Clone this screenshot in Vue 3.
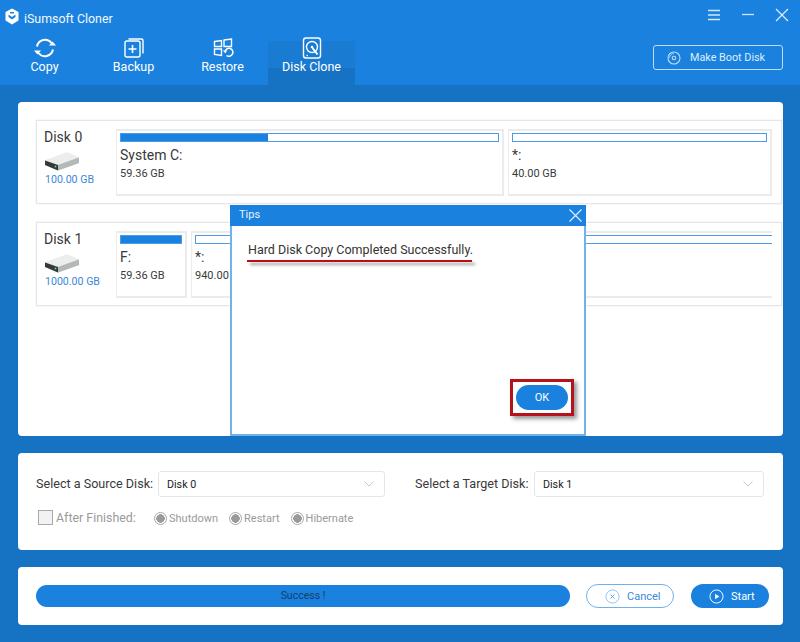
<script setup>
const tabs = [
  { label: 'Copy', icon: 'copy' },
  { label: 'Backup', icon: 'backup' },
  { label: 'Restore', icon: 'restore' },
  { label: 'Disk Clone', icon: 'clone', active: true },
]
const disks = [
  { name: 'Disk 0', size: '100.00 GB', parts: [
    { name: 'System C:', size: '59.36 GB', fill: 39, width: 388 },
    { name: '*:', size: '40.00 GB', fill: 0, width: 264 },
  ] },
  { name: 'Disk 1', size: '1000.00 GB', parts: [
    { name: 'F:', size: '59.36 GB', fill: 100, width: 71 },
    { name: '*:', size: '940.00 GB', fill: 0, width: 640 },
  ] },
]
</script>

<template>
  <div class="app">
    <header class="head">
      <div class="titlebar">
        <svg class="logo" width="14" height="17" viewBox="0 0 14 17">
          <path d="M7 .5 13.500 4v8.500L7 16.500 .5 12.500V4z" fill="#fff"/>
          <path d="M3.500 6.500 7 9l3.500-2.500V9L7 11.500 3.500 9z" fill="#1a82de"/>
          <path d="M5 4h4v1.500H5z" fill="#1a82de"/>
        </svg>
        <span class="apptitle">iSumsoft Cloner</span>
        <span class="spacer"></span>
        <svg class="winbtn" width="14" height="12" viewBox="0 0 14 12"><path d="M1 1.500h12M1 6h12M1 10.500h12" stroke="#cfe6fb" stroke-width="1.300" fill="none"/></svg>
        <svg class="winbtn min" width="14" height="12" viewBox="0 0 14 12"><path d="M1 5.500h12" stroke="#cfe6fb" stroke-width="1.300" fill="none"/></svg>
        <svg class="winbtn close" width="14" height="14" viewBox="0 0 14 14"><path d="M1 1l12 12M13 1 1 13" stroke="#e4f1fd" stroke-width="1.100" fill="none"/></svg>
      </div>
      <div class="navrow">
        <nav class="tabs">
          <div v-for="t in tabs" :key="t.label" class="tab" :class="{ active: t.active }">
            <svg class="tabicon" width="24" height="24" viewBox="0 0 24 24" fill="none" stroke="#fff" stroke-width="1.400">
              <template v-if="t.icon === 'copy'">
                <path d="M4 10.500a8.200 8.200 0 0 1 14.500-3.500" stroke-width="2"/>
                <path d="M20 13.500a8.200 8.200 0 0 1-14.500 3.500" stroke-width="2"/>
                <path d="M16 9.500h7l-3.500-4z" fill="#fff" stroke="none"/>
                <path d="M8 14.500H1l3.500 4z" fill="#fff" stroke="none"/>
              </template>
              <template v-else-if="t.icon === 'backup'">
                <rect x="3" y="5" width="15" height="16" rx="2"/>
                <path d="M6.500 3h13a1.500 1.500 0 0 1 1.500 1.500v13"/>
                <path d="M10.500 9v8M6.500 13h8" stroke-width="1.600"/>
              </template>
              <template v-else-if="t.icon === 'restore'">
                <path d="M3.500 5.500 10.500 4.500v6h-7zM13 4l7.500-1v7.500H13zM3.500 13h7v6.500l-7-1z"/>
                <path d="M14 15.500a4 4 0 1 1 1.500 4" stroke-width="1.500"/>
                <path d="M11.800 14.500h4.500l-2 2.800z" fill="#fff" stroke="none"/>
              </template>
              <template v-else>
                <rect x="3.500" y="2" width="17" height="20" rx="2.500"/>
                <circle cx="12" cy="11" r="5.500"/>
                <circle cx="12" cy="11" r="1.300" fill="#fff" stroke="none"/>
                <path d="M12.500 12l5 6.500" stroke-width="2"/>
                <path d="M6.500 19.500h1.500" />
              </template>
            </svg>
            <span>{{ t.label }}</span>
          </div>
        </nav>
        <div class="bootbtn">
          <svg width="14" height="14" viewBox="0 0 14 14" fill="none" stroke="#b9dbf8" stroke-width="1.100"><circle cx="7" cy="7" r="6"/><circle cx="7" cy="7" r="1.700"/><path d="M2.500 7A4.500 4.500 0 0 1 7 2.500" stroke-width=".8"/></svg>
          <span>Make Boot Disk</span>
        </div>
      </div>
    </header>

    <main class="body">
      <section class="card disks">
        <div v-for="d in disks" :key="d.name" class="diskrow">
          <div class="diskinfo">
            <div class="diskname">{{ d.name }}</div>
            <svg class="drive" width="36" height="20" viewBox="0 0 36 20">
              <path d="M1 9.500 23 1.500 35 6.500V12L14 19.500 1 14z" fill="#d2d4d4"/>
              <path d="M1 9.500 23 1.500 35 6.500 14 14z" fill="#eceded"/>
              <path d="M1 9.500 14 14V19.500L1 14z" fill="#34393a"/>
              <path d="M14 14 35 6.500V12L14 19.500z" fill="#b5b8b8"/>
              <circle cx="11.500" cy="15.500" r=".9" fill="#5fe07a"/>
            </svg>
            <div class="disksize">{{ d.size }}</div>
          </div>
          <div class="parts">
            <div v-for="p in d.parts" :key="p.name + p.size" class="part" :style="{ width: p.width + 'px' }">
              <div class="bar"><div class="fill" :style="{ width: p.fill + '%' }"></div></div>
              <div class="partname">{{ p.name }}</div>
              <div class="partsize">{{ p.size }}</div>
            </div>
          </div>
        </div>
      </section>

      <section class="card options">
        <div class="selects">
          <div class="selgroup source">
            <label>Select a Source Disk:</label>
            <div class="select"><span>Disk 0</span><svg width="10" height="6" viewBox="0 0 10 6"><path d="M.5.500 5 5 9.500.500" fill="none" stroke="#c2c6ca"/></svg></div>
          </div>
          <div class="selgroup target">
            <label>Select a Target Disk:</label>
            <div class="select"><span>Disk 1</span><svg width="10" height="6" viewBox="0 0 10 6"><path d="M.5.500 5 5 9.500.500" fill="none" stroke="#c2c6ca"/></svg></div>
          </div>
        </div>
        <div class="after">
          <span class="check"></span>
          <span class="aftertext">After Finished:</span>
          <span class="radio"><i></i>Shutdown</span>
          <span class="radio"><i></i>Restart</span>
          <span class="radio"><i></i>Hibernate</span>
        </div>
      </section>

      <section class="card actions">
        <div class="progress">Success !</div>
        <div class="btn cancel">
          <svg width="15" height="15" viewBox="0 0 16 16" fill="none" stroke="#8cc2f2"><circle cx="8" cy="8" r="7"/><path d="M5.800 5.800l4.400 4.400M10.200 5.800l-4.400 4.400" stroke="#6fa6de"/></svg>
          <span>Cancel</span>
        </div>
        <div class="btn start">
          <svg width="15" height="15" viewBox="0 0 16 16" fill="none" stroke="#fff"><circle cx="8" cy="8" r="7"/><path d="M6.500 5v6L11 8z" fill="#fff" stroke="none"/></svg>
          <span>Start</span>
        </div>
      </section>
    </main>

    <div class="modal">
      <div class="modalhead">
        <span>Tips</span>
        <svg width="13" height="13" viewBox="0 0 13 13"><path d="M.5.500l12 12M12.500.500l-12 12" stroke="#e4f1fd" stroke-width="1.100" fill="none"/></svg>
      </div>
      <div class="modalmsg">Hard Disk Copy Completed Successfully.<span class="underline"></span></div>
      <div class="okframe"><div class="okbtn">OK</div></div>
    </div>
  </div>
</template>

<style scoped>
.app {
  position: relative;
  width: 800px;
  height: 642px;
  overflow: hidden;
  background: #1672c3;
  font-family: Roboto, "Liberation Sans", sans-serif;
  color: #3a3a3a;
}
.head { height: 85px; background: #1a82de; color: #fff; box-sizing: border-box; }
.titlebar { height: 41px; display: flex; align-items: flex-start; padding: 9px 11px 0 5px; box-sizing: border-box; }
.logo { margin-top: -1px; }
.apptitle { font-size: 12.400px; margin-left: 5px; margin-top: 2px; line-height: 16px; color: #f2f8fe; }
.spacer { flex: 1; }
.winbtn { margin-top: 0; }
.winbtn.min { margin-left: 20px; }
.winbtn.close { margin-left: 20px; margin-top: -1px; }
.navrow { display: flex; align-items: flex-start; justify-content: space-between; padding: 0 17px 0 1px; height: 44px; }
.tabs { display: flex; gap: 2px; height: 44px; }
.tab { width: 87px; height: 44px; display: flex; flex-direction: column; align-items: center; font-size: 12.500px; line-height: 16px; position: relative; }
.tab span { position: absolute; top: 18px; white-space: nowrap; }
.tab.active { background: linear-gradient(#1a7bd3 0 27px, #1672c3 27px); }
.tabicon { position: absolute; top: -5px; }
.bootbtn { margin-top: 4px; width: 130px; height: 25px; box-sizing: border-box; border: 1px solid #bcdcf8; border-radius: 3px; display: flex; align-items: center; padding-left: 13px; gap: 9px; font-size: 10.800px; color: #deeefc; }
.body { padding: 17px 17px 0 18px; display: flex; flex-direction: column; gap: 17px; }
.card { background: #fff; border-radius: 4px; box-sizing: border-box; width: 765px; }
.disks { height: 334px; padding: 18px 1px 0 18px; display: flex; flex-direction: column; gap: 18px; }
.diskrow { height: 84px; box-sizing: border-box; border: 1px solid #e6e6e6; box-shadow: 0 0 0 .5px #f0f0f0; display: flex; padding: 8px 9px 7px 7px; }
.diskinfo { width: 72px; flex: none; }
.diskname { font-size: 14px; line-height: 18px; margin-top: -1px; }
.drive { display: block; margin-top: 5px; }
.disksize { font-size: 10.600px; line-height: 14px; color: #3d87d8; margin-top: 2px; margin-left: 1px; white-space: nowrap; }
.parts { flex: 1; display: flex; gap: 4px; min-width: 0; overflow: hidden; }
.part { flex: none; box-sizing: border-box; border: 2px solid #ebebeb; border-left-width: 1px; padding: 2px 3px; height: 67px; }
.bar { height: 9px; border: 1px solid #4a9ce8; box-sizing: border-box; background: #fff; }
.fill { height: 100%; background: #1a82de; }
.partname { font-size: 14px; line-height: 18px; margin-top: 4px; }
.partsize { font-size: 11px; line-height: 14px; margin-top: 3px; }
.options { height: 97px; padding: 18px 18px 0 18px; }
.selects { display: flex; }
.selgroup { display: flex; align-items: center; font-size: 12.600px; }
.selgroup label { padding-bottom: 2px; }
.source label { width: 122px; }
.target { margin-left: 30px; }
.target label { width: 119px; }
.source .select { width: 227px; }
.target .select { width: 230px; }
.select { height: 26px; box-sizing: border-box; border: 1px solid #e4e6e8; border-radius: 3px; display: flex; align-items: center; justify-content: space-between; padding: 0 10px 0 8px; font-size: 10.700px; color: #222; }
.after { display: flex; align-items: center; margin-top: 12px; padding-left: 2px; color: #9a9a9a; }
.check { width: 15px; height: 15px; box-sizing: border-box; background: #f2f2f2; border: 1px solid #a8a8a8; }
.aftertext { font-size: 12.400px; margin-left: 3px; width: 98px; padding-top: 1px; }
.radio { font-size: 11px; display: flex; align-items: center; margin-right: 11px; padding-top: 3px; line-height: 13px; }
.radio i { width: 13px; height: 13px; box-sizing: border-box; border: 1px solid #a8a8a8; border-radius: 50%; margin-right: 2px; display: block; position: relative; background: radial-gradient(circle, #9a9a9a 0 4px, #fff 4.500px); }
.actions { height: 58px; padding: 17px 14px 0 18px; display: flex; align-items: flex-start; }
.progress { width: 534px; height: 22px; margin-top: 1px; border-radius: 11px; background: #1a82de; text-align: center; font-size: 10.500px; line-height: 22px; color: #11406b; }
.btn { height: 24px; box-sizing: border-box; border-radius: 12px; display: flex; align-items: center; font-size: 11px; }
.cancel { width: 88px; margin-left: 16px; border: 1px solid #6db0ee; color: #3d87d8; padding-left: 18px; gap: 7px; }
.start { width: 78px; margin-left: 17px; background: #1a82de; color: #fff; padding-left: 18px; gap: 7px; }
.modal { position: absolute; left: 230px; top: 205px; width: 356px; height: 231px; box-sizing: border-box; border: 2px solid #6fb2ee; border-top: 0; background: #fff; }
.modalhead { height: 21px; margin: 0 -2px; background: #1a82de; color: #e8f3fd; font-size: 11px; display: flex; align-items: center; justify-content: space-between; padding: 0 4px 2px 9px; box-sizing: border-box; }
.modalhead svg { margin-top: 2px; }
.modalmsg { position: absolute; left: 16px; top: 37px; font-size: 12.500px; line-height: 16px; white-space: nowrap; color: #333; }
.underline { position: absolute; left: -1px; right: 1px; top: 18px; height: 2px; background: #bb0d14; box-shadow: 3px 3px 3px rgba(70,70,70,.55); }
.okframe { position: absolute; left: 278px; top: 174px; width: 64px; height: 37px; box-sizing: border-box; border: 3px solid #b5121b; box-shadow: 3px 3px 4px rgba(70,70,70,.55); display: flex; align-items: center; justify-content: center; }
.okbtn { width: 52px; height: 25px; border-radius: 13px; background: #1a82de; color: #fff; text-align: center; font-size: 11px; line-height: 25px; }
</style>
